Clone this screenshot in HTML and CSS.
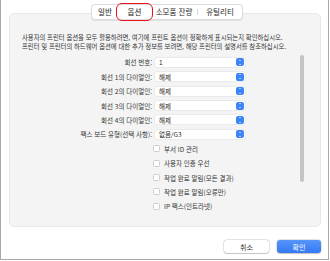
FILE: index.html
```html
<!DOCTYPE html>
<html lang="ko">
<head>
  <meta charset="UTF-8">
  <title>옵션</title>
  <link rel="stylesheet" href="styles.css">
</head>
<body>
  <div class="window">
    <!-- Tabs -->
    <div class="tabs">
      <div class="tab tab-general">일반</div>
      <div class="tab tab-options">옵션</div>
      <div class="tab tab-supplies">소모품 잔량</div>
      <span class="sep"></span>
      <div class="tab tab-utility">유틸리티</div>
    </div>

    <!-- Options panel -->
    <div class="panel">
      <p class="desc">사용자의 프린터 옵션을 모두 활용하려면, 여기에 프린트 옵션이 정확하게 표시되는지 확인하십시오.<br>프린터 및 프린터의 하드웨어 옵션에 대한 추가 정보를 보려면, 해당 프린터의 설명서를 참조하십시오.</p>

      <div class="scroll">
        <div class="form">
          <div class="row">
            <span class="label">회선 번호:</span>
            <div class="select"><span>1</span><i class="stepper"></i></div>
          </div>
          <div class="row">
            <span class="label">회선 1의 다이얼인:</span>
            <div class="select"><span>해제</span><i class="stepper"></i></div>
          </div>
          <div class="row">
            <span class="label">회선 2의 다이얼인:</span>
            <div class="select"><span>해제</span><i class="stepper"></i></div>
          </div>
          <div class="row">
            <span class="label">회선 3의 다이얼인:</span>
            <div class="select"><span>해제</span><i class="stepper"></i></div>
          </div>
          <div class="row">
            <span class="label">회선 4의 다이얼인:</span>
            <div class="select"><span>해제</span><i class="stepper"></i></div>
          </div>
          <div class="row">
            <span class="label">팩스 보드 유형(선택 사항):</span>
            <div class="select"><span>없음/G3</span><i class="stepper"></i></div>
          </div>
          <div class="row">
            <span class="label"></span>
            <label class="check"><i class="box"></i>부서 ID 관리</label>
          </div>
          <div class="row">
            <span class="label"></span>
            <label class="check"><i class="box"></i>사용자 인증 우선</label>
          </div>
          <div class="row">
            <span class="label"></span>
            <label class="check"><i class="box"></i>작업 완료 알림(모든 결과)</label>
          </div>
          <div class="row">
            <span class="label"></span>
            <label class="check"><i class="box"></i>작업 완료 알림(오류만)</label>
          </div>
          <div class="row">
            <span class="label"></span>
            <label class="check"><i class="box"></i>IP 팩스(인트라넷)</label>
          </div>
        </div>
        <div class="track"><div class="thumb"></div></div>
      </div>
    </div>

    <!-- Buttons -->
    <div class="buttons">
      <button class="btn">취소</button>
      <button class="btn btn-primary">확인</button>
    </div>
  </div>
</body>
</html>
```

FILE: styles.css
```css
body {
  margin: 0;
  font-family: "Noto Sans CJK KR", "Noto Sans", sans-serif;
  color: #262626;
  background: #fff;
}
.window {
  width: 329px;
  height: 260px;
  box-sizing: border-box;
  border: 1px solid #a9a9a9;
  border-top: none;
  padding: 4px 7px 0 8px;
}
.tabs {
  position: relative;
  z-index: 1;
  display: flex;
  align-items: center;
  width: 150px;
  height: 14px;
  margin: 0 auto -7px 82px;
  background: #fff;
  border: 1px solid #dcdcdc;
  border-radius: 4px;
  box-shadow: 0 0.5px 1px rgba(0, 0, 0, 0.08);
  font-size: 7.5px;
}
.tab {
  text-align: center;
  line-height: 14px;
}
.tab-general { width: 26px; }
.tab-options {
  width: 33px;
  outline: 1.6px solid #e8131b;
  outline-offset: 1.5px;
  border-radius: 4px;
}
.tab-supplies { width: 46px; }
.tab-utility { width: 44px; }
.sep {
  width: 1px;
  height: 6px;
  background: #d6d6d6;
}
.panel {
  height: 214px;
  box-sizing: border-box;
  background: #f4f4f4;
  border: 1px solid #e8e8e8;
  border-radius: 5px;
  padding-top: 20px;
}
.desc {
  margin: 0 0 4px 12px;
  font-size: 6.35px;
  line-height: 8.6px;
  color: #333;
  white-space: nowrap;
}
.scroll {
  display: flex;
  height: 160px;
  overflow: hidden;
}
.form {
  flex: 1;
}
.row {
  display: flex;
  align-items: center;
  height: 14.4px;
  font-size: 6.5px;
}
.label {
  width: 142px;
  flex-shrink: 0;
  text-align: right;
  padding-right: 3px;
  color: #333;
}
.select {
  display: flex;
  align-items: center;
  justify-content: space-between;
  width: 90px;
  height: 9px;
  box-sizing: border-box;
  padding: 0 1px 0 4px;
  background: #fff;
  border-radius: 2px;
  box-shadow: 0 0 0 0.5px rgba(0, 0, 0, 0.08);
}
.stepper {
  position: relative;
  width: 8px;
  height: 8px;
  border-radius: 2px;
  background: #3d85f6;
}
.stepper::before,
.stepper::after {
  content: "";
  position: absolute;
  left: 2.5px;
  border-left: 1.5px solid transparent;
  border-right: 1.5px solid transparent;
}
.stepper::before {
  top: 1.3px;
  border-bottom: 1.6px solid #fff;
}
.stepper::after {
  bottom: 1.3px;
  border-top: 1.6px solid #fff;
}
.check {
  display: flex;
  align-items: center;
  margin-left: -2px;
  color: #333;
}
.box {
  width: 5px;
  height: 5px;
  margin-right: 4px;
  background: #fff;
  border: 0.8px solid #cdcdcd;
  border-radius: 1.5px;
}
.track {
  width: 6px;
  margin: 0 15px 0 0;
  padding: 0 1px;
  box-sizing: border-box;
}
.thumb {
  width: 4px;
  height: 127px;
  background: #c4c4c4;
  border-radius: 2px;
}
.buttons {
  display: flex;
  justify-content: flex-end;
  gap: 8px;
  margin-top: 13px;
}
.btn {
  width: 45px;
  height: 13px;
  padding: 0;
  font-family: inherit;
  font-size: 7px;
  color: #333;
  background: #fff;
  border: none;
  border-radius: 3px;
  box-shadow: 0 0 0 0.5px rgba(0, 0, 0, 0.2), 0 0.5px 1px rgba(0, 0, 0, 0.15);
}
.btn-primary {
  width: 44px;
  color: #fff;
  background: linear-gradient(#5596f8, #3579f5);
}
```
